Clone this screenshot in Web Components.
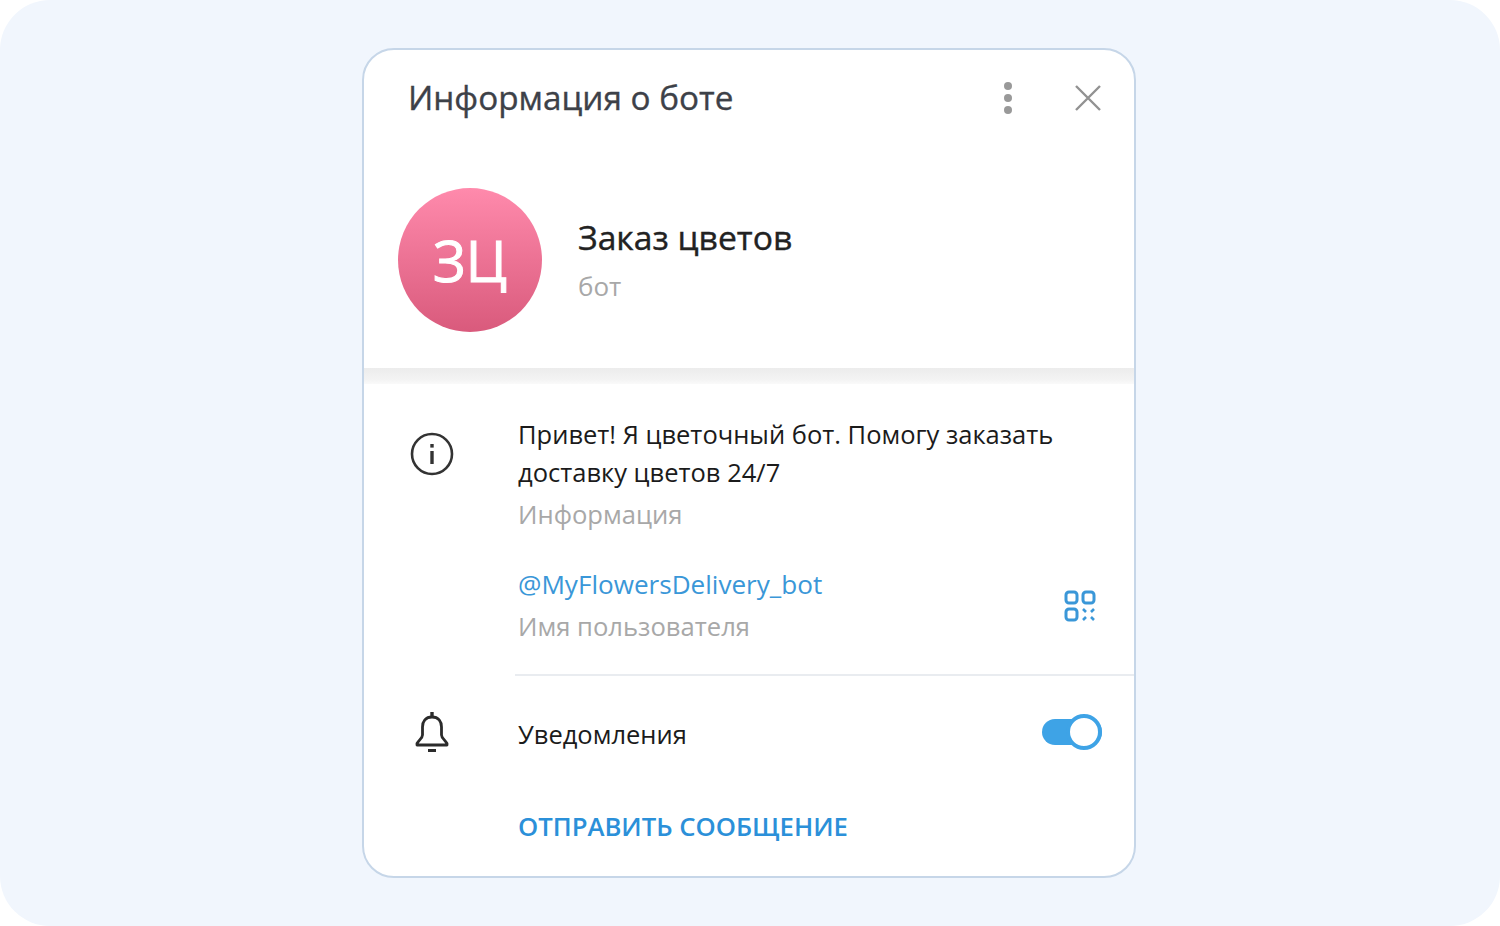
<!DOCTYPE html>
<html lang="ru"><head><meta charset="utf-8"><title>Информация о боте</title>
<style>html,body{margin:0;background:#fff}body{font-family:"Open Sans",sans-serif}</style></head>
<body>
<bot-stage>
<bot-card>
  <bot-header title-text="Информация о боте"></bot-header>
  <bot-profile initials="ЗЦ" name="Заказ цветов" sub="бот"></bot-profile>
  <bot-divider></bot-divider>
  <bot-row icon="info">
    <bot-field label="Информация">Привет! Я цветочный бот. Помогу заказать<br>доставку цветов 24/7</bot-field>
    <bot-field label="Имя пользователя" link qr>@MyFlowersDelivery_bot</bot-field>
  </bot-row>
  <bot-notify></bot-notify>
  <bot-action>ОТПРАВИТЬ СООБЩЕНИЕ</bot-action>
</bot-card>
</bot-stage>
<script>
function def(name,html,init){customElements.define(name,class extends HTMLElement{constructor(){super();this.attachShadow({mode:'open'}).innerHTML=html;}connectedCallback(){init&&init(this,this.shadowRoot);}});}
def('bot-stage',`<style>:host{display:flex;justify-content:center;width:1500px;height:926px;box-sizing:border-box;padding:48px 2px 0 0;background:#f1f6fd;border-radius:50px}</style><slot></slot>`);
def('bot-card',`<style>:host{display:flex;flex-direction:column;width:774px;height:830px;box-sizing:border-box;background:#fff;border:2px solid #c6d6e8;border-radius:32px;overflow:hidden}</style><slot></slot>`);
def('bot-header',`<style>:host{display:flex;align-items:center;height:94px;padding:0 33px 4px 44px;color:#3d4148;font-size:33.3px;font-weight:400;-webkit-text-stroke:.35px #3d4148}
.t{flex:1;white-space:nowrap}svg{display:block;margin-top:2px}.d{margin-right:61px}</style>
<div class="t"></div>
<svg class="d" width="12" height="36" viewBox="0 0 12 36"><circle cx="6" cy="6" r="4" fill="#999"/><circle cx="6" cy="18" r="4" fill="#999"/><circle cx="6" cy="30" r="4" fill="#999"/></svg>
<svg width="26" height="26" viewBox="0 0 26 26"><path d="M1 1 25 25M25 1 1 25" stroke="#929292" stroke-width="2.4"/></svg>`,(h,s)=>{s.querySelector('.t').textContent=h.getAttribute('title-text')});
def('bot-profile',`<style>:host{display:flex;align-items:center;height:220px;padding:4px 0 0 34px;box-sizing:border-box;gap:36px}
.a{width:144px;height:144px;border-radius:50%;background:linear-gradient(180deg,#ff8aac,#d95a7c);color:#fff;display:flex;align-items:center;justify-content:center;font-size:56px;-webkit-text-stroke:1px #fff}
.n{font-size:33.7px;color:#222;line-height:40px;-webkit-text-stroke:.4px #222}.s{font-size:26px;color:#a8a8a8;line-height:34px;margin-top:12px}</style>
<div class="a"></div><div class="i"><div class="n"></div><div class="s"></div></div>`,(h,s)=>{s.querySelector('.a').textContent=h.getAttribute('initials');s.querySelector('.n').textContent=h.getAttribute('name');s.querySelector('.s').textContent=h.getAttribute('sub')});
def('bot-divider',`<style>:host{display:block;height:16px;background:linear-gradient(180deg,#ececec,#f3f3f3 70%,#fafafa)}</style>`);
def('bot-row',`<style>:host{display:flex;padding:31px 0 0 46px;height:292px;box-sizing:border-box}
svg{display:block;flex:none;margin:17px 0 0 0}.b{flex:1;display:flex;flex-direction:column;gap:26px;border-bottom:2px solid #e9ecf0;margin-left:61px;padding-left:3px;margin-top:0}</style>
<svg width="44" height="44" viewBox="0 0 44 44" fill="none" stroke="#333"><circle cx="22" cy="22" r="20" stroke-width="2.6"/><path d="M22 19v13" stroke-width="3.4"/><path d="M22 12v3.6" stroke-width="3.4"/></svg>
<div class="b"><slot></slot></div>`);
def('bot-field',`<style>:host{display:block;position:relative;font-size:25.5px;line-height:38px;color:#1b1b1b;white-space:nowrap}
:host([link]) .v{color:#3a97d8;font-size:26.1px}.l{color:#a8a8a8;line-height:48px;font-size:25.6px}
svg{position:absolute;right:38px;top:25px}</style>
<div class="v"><slot></slot></div><div class="l"></div>`,(h,s)=>{s.querySelector('.l').textContent=h.getAttribute('label');if(h.hasAttribute('qr')){s.appendChild(document.createRange().createContextualFragment(`<svg width="32" height="32" viewBox="0 0 32 32" fill="none" stroke="#3a97d8" stroke-width="3"><rect x="2" y="2" width="11" height="11" rx="3"/><rect x="19" y="2" width="11" height="11" rx="3"/><rect x="2" y="19" width="11" height="11" rx="3"/><path d="M19 19l3 3M30 19l-3 3M19 30l3-3M30 30l-3-3" stroke-width="2.6"/></svg>`));}});
def('bot-notify',`<style>:host{display:flex;align-items:center;height:112px;padding:0 32px 0 50px;font-size:25.5px;color:#1b1b1b}
.t{flex:1;margin-left:68px;margin-top:3px}svg{display:block}
.sw{position:relative;width:60px;height:36px}.tr{position:absolute;left:0;right:0;top:5px;height:26px;border-radius:13px;background:#3ea3e6}.k{position:absolute;right:0;top:0;width:36px;height:36px;box-sizing:border-box;border-radius:50%;background:#fff;border:4px solid #3ea3e6}</style>
<svg width="36" height="42" viewBox="0 0 36 42" fill="none" stroke="#2b2b2b" stroke-width="2.8" stroke-linejoin="round"><path d="M18 6c-6.5 0-9.5 4.5-9.500 10v8c0 3-3.500 5-5.500 8.500V34h30v-1.500c-2-3.500-5.500-5.500-5.500-8.500v-8c0-5.500-3-10-9.500-10z"/><path d="M18 1v5" stroke-width="3.400"/><path d="M14 39.500h8" stroke-width="3"/></svg>
<div class="t">Уведомления</div><div class="sw"><div class="tr"></div><div class="k"></div></div>`);
def('bot-action',`<style>:host{display:block;padding:0 0 0 154px;font-size:25.7px;font-weight:600;color:#2b90d9;line-height:34px;margin-top:22px}</style><slot></slot>`);
</script>
</body></html>
